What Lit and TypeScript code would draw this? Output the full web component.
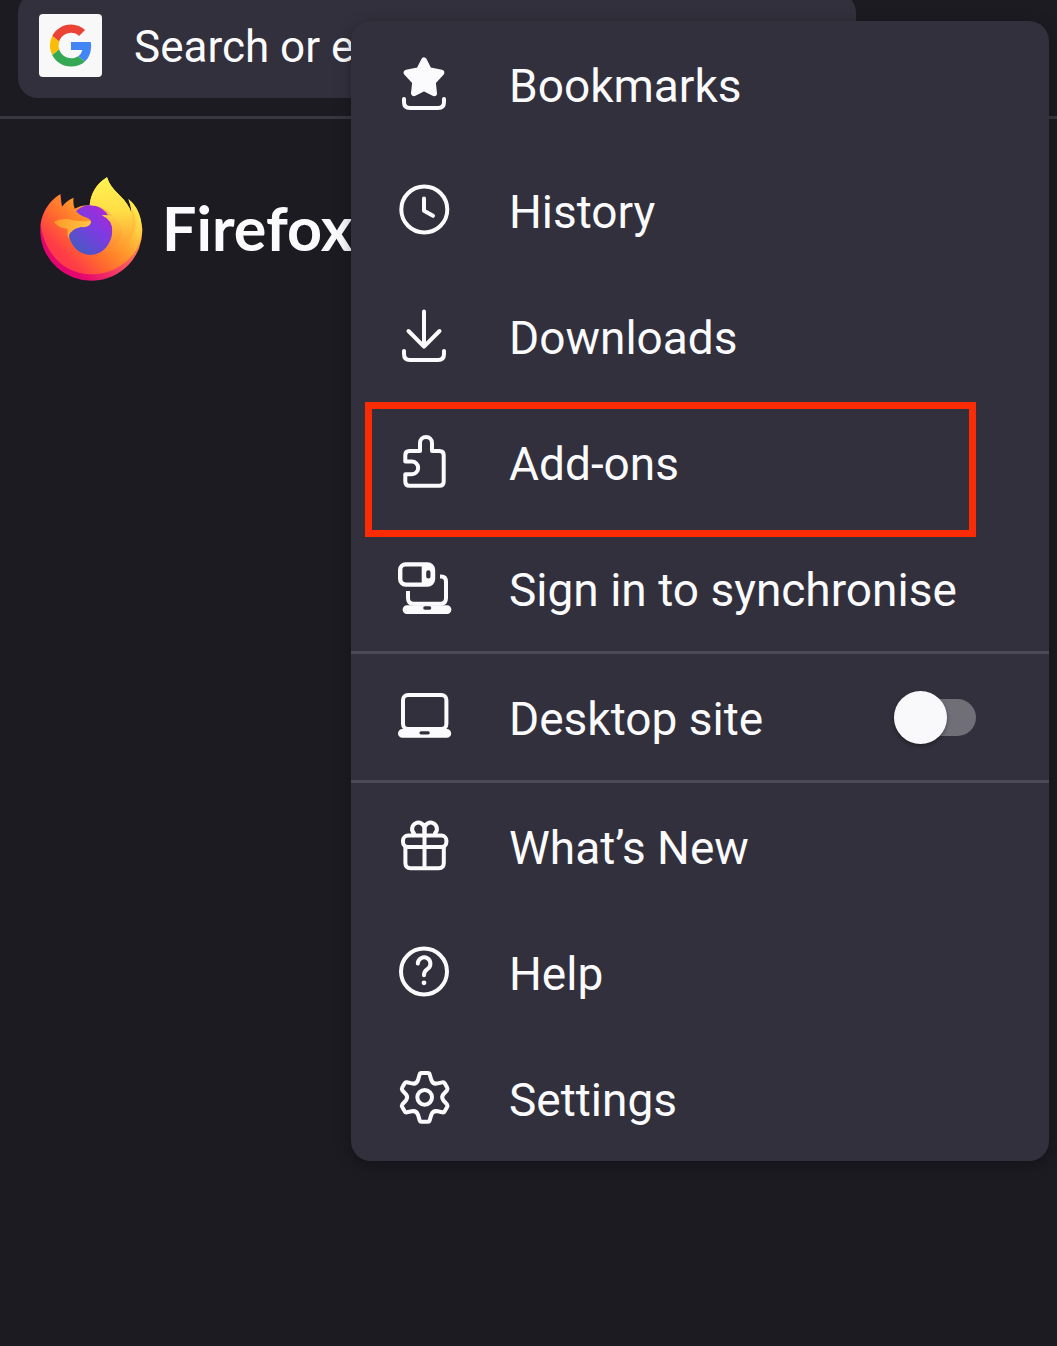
import { LitElement, html, css, svg, nothing, type SVGTemplateResult } from "lit";
import { customElement, property, state } from "lit/decorators.js";

const TRAY = "M8 43V46Q8 52 14 52H42Q48 52 48 46V43";

const ICONS: Record<string, SVGTemplateResult> = {
  bookmarks: svg`
    <path class="solid" stroke-width="6" d="M28 4.5L32.8 14.2L45.3 16.8L36.8 26L38 37.2L28 32L18 37.2L19.2 26L10.7 16.8L23.2 14.2Z"/>
    <path d=${TRAY}/>`,
  history: svg`
    <circle cx="28.3" cy="27.5" r="23"/>
    <path d="M28 16.5V28.7L37 33.8"/>`,
  downloads: svg`
    <path d="M28 3.5V38M12.5 23L28 38.7L43.5 23"/>
    <path d=${TRAY}/>`,
  addons: svg`
    <path d="M9.3 27.6V21.2Q9.3 17 13.5 17H24V9A6 6 0 0 1 36 9V17H43.4Q47.7 17 47.7 21.3V47.5Q47.7 51.8 43.4 51.8H13.6Q9.3 51.8 9.3 47.5V40.3H15.8A6.35 6.35 0 0 0 15.8 27.6Z"/>`,
  sync: svg`
    <rect x="4.2" y="4.4" width="32.8" height="20.2" rx="5.5" stroke-width="4.4"/>
    <path class="fill" fill-rule="evenodd" d="M25.7 4H33Q38 4 38 9V20Q38 25 33 25H25.7ZM32.3 10.2Q30.2 10.2 30.2 12.4V16.4Q30.2 18.5 32.3 18.5Q34.6 18.5 34.6 16.4V12.4Q34.6 10.2 32.3 10.2Z"/>
    <path d="M12 31V38Q12 43.8 17.5 43.8H44.5Q50 43.8 50 38V22Q50 16.6 45 16.6H44" stroke-linecap="butt"/>
    <path class="fill" fill-rule="evenodd" d="M11 45.2H51A4.3 4.3 0 0 1 51 54H11A4.3 4.3 0 0 1 11 45.2ZM29 46.2A1.8 1.8 0 0 0 29 49.8H33.5A1.8 1.8 0 0 0 33.5 46.2Z"/>`,
  desktop: svg`
    <rect x="7" y="6" width="43.4" height="34" rx="5"/>
    <path class="fill" fill-rule="evenodd" d="M6.4 40H50.8A4.4 4.4 0 0 1 50.8 48.8H6.4A4.4 4.4 0 0 1 6.4 40ZM25 42.2A1.6 1.6 0 0 0 25 45.4H32.2A1.6 1.6 0 0 0 32.2 42.2Z"/>`,
  gift: svg`
    <rect x="7" y="17.6" width="43.4" height="11.4" rx="5"/>
    <path d="M9.4 29V45Q9.4 50.2 14.6 50.2H42.6Q47.8 50.2 47.8 45V29M28.5 11V50"/>
    <path d="M28.5 17.5V10.5A6.2 6.2 0 1 0 18 15.3M28.5 10.5A6.2 6.2 0 1 1 39 15.3"/>`,
  help: svg`
    <circle cx="28" cy="27.5" r="23"/>
    <path d="M21.8 19.6A6.3 6.3 0 1 1 31.2 25.2Q28 27.2 28 31.3"/>
    <circle class="fill" cx="28" cy="38.8" r="2.4"/>`,
  settings: svg`
    <g transform="translate(-11 -10) scale(.3333)" stroke-width="12">
      <path d="M109 39H129Q133 39 134 43L139 60Q144 74 158 70L172 67Q177 66 179 70L186 82Q189 87 186 91L175 103Q168 112 175 121L186 133Q189 137 186 142L179 154Q177 158 172 157L158 154Q144 151 139 164L134 181Q133 185 129 185H109Q105 185 104 181L99 164Q94 151 80 154L66 157Q61 158 59 154L52 142Q49 137 52 133L63 121Q70 112 63 103L52 91Q49 87 52 82L59 70Q61 66 66 67L80 70Q94 74 99 60L104 43Q105 39 109 39Z"/>
      <circle cx="119" cy="112" r="22"/>
    </g>`,
};

interface MenuEntry {
  icon: string;
  label: string;
  marked?: boolean;
}

const LIBRARY: MenuEntry[] = [
  { icon: "bookmarks", label: "Bookmarks" },
  { icon: "history", label: "History" },
  { icon: "downloads", label: "Downloads" },
  { icon: "addons", label: "Add-ons", marked: true },
  { icon: "sync", label: "Sign in to synchronise" },
];

const SUPPORT: MenuEntry[] = [
  { icon: "gift", label: "What’s New" },
  { icon: "help", label: "Help" },
  { icon: "settings", label: "Settings" },
];

@customElement("menu-icon")
export class MenuIcon extends LitElement {
  @property() name = "";

  static styles = css`
    :host {
      display: block;
      flex: none;
      width: 56px;
      height: 56px;
    }
    .icon {
      display: block;
      width: 100%;
      height: 100%;
      fill: none;
      stroke: currentColor;
      stroke-linecap: round;
      stroke-linejoin: round;
    }
    .solid {
      fill: currentColor;
    }
    .fill {
      fill: currentColor;
      stroke: none;
    }
  `;

  render() {
    return html`<svg class="icon" viewBox="0 0 56 56" stroke-width="4" aria-hidden="true">${ICONS[this.name]}</svg>`;
  }
}

@customElement("firefox-logo")
export class FirefoxLogo extends LitElement {
  static styles = css`
    :host {
      display: block;
      flex: none;
      width: 103px;
      height: 106px;
    }
    .logo {
      display: block;
      width: 100%;
      height: 100%;
    }
  `;

  render() {
    return html`<svg class="logo" viewBox="31 35 309 318" aria-hidden="true">
      <defs>
        <linearGradient id="body" x1="300" y1="90" x2="90" y2="300" gradientUnits="userSpaceOnUse">
          <stop offset="0" stop-color="#fff04f"/>
          <stop offset=".22" stop-color="#ffca41"/>
          <stop offset=".45" stop-color="#ff962b"/>
          <stop offset=".68" stop-color="#ff6a2e"/>
          <stop offset=".9" stop-color="#ff3b47"/>
        </linearGradient>
        <linearGradient id="rim" x1="330" y1="190" x2="170" y2="350" gradientUnits="userSpaceOnUse">
          <stop offset="0" stop-color="#ffad3c"/>
          <stop offset=".45" stop-color="#fb5560"/>
          <stop offset="1" stop-color="#e3066f"/>
        </linearGradient>
        <linearGradient id="flame" x1="225" y1="40" x2="235" y2="268" gradientUnits="userSpaceOnUse">
          <stop offset="0" stop-color="#fff252"/>
          <stop offset=".45" stop-color="#ffdc45"/>
          <stop offset=".7" stop-color="#ffb83b"/>
          <stop offset="1" stop-color="#ff8a33" stop-opacity="0"/>
        </linearGradient>
        <linearGradient id="lick" x1="235" y1="150" x2="225" y2="268" gradientUnits="userSpaceOnUse">
          <stop offset="0" stop-color="#ffd044"/>
          <stop offset=".5" stop-color="#ffa233"/>
          <stop offset="1" stop-color="#ff6a35" stop-opacity="0"/>
        </linearGradient>
        <linearGradient id="globe" x1="232" y1="140" x2="140" y2="245" gradientUnits="userSpaceOnUse">
          <stop offset="0" stop-color="#a52ad8"/>
          <stop offset=".45" stop-color="#7c3be2"/>
          <stop offset="1" stop-color="#4b57c4"/>
        </linearGradient>
        <linearGradient id="snout" x1="75" y1="165" x2="180" y2="175" gradientUnits="userSpaceOnUse">
          <stop offset="0" stop-color="#ff9a28"/>
          <stop offset="1" stop-color="#ffc443"/>
        </linearGradient>
      </defs>
      <path fill="url(#rim)" d="M32 190C32 150 55 108 92 87L97 124L134 130L280 140L306 150Q304 120 296 101Q330 130 338 190A153 151 0 0 1 32 200Z"/>
      <path fill="url(#body)" d="M33 180C38 140 60 106 92 87Q91 108 97 124Q112 104 132 97Q129 114 135 130Q155 119 180 120Q185 65 232 36Q240 62 266 86Q298 118 306 142Q304 120 296 101Q334 130 337 190C336 270 262 327 186 327C108 327 48 272 33 180Z"/>
      <ellipse cx="182" cy="194" rx="66" ry="75" fill="url(#globe)"/>
      <path fill="url(#flame)" d="M180 120Q185 65 232 36Q240 62 266 86Q304 120 306 156C306 206 278 246 214 268Q250 240 250 200Q250 170 236 155L248 151Q222 120 180 120Z"/>
      <path fill="url(#lick)" d="M216 150Q232 148 248 152Q276 170 276 200Q272 246 208 270Q249 246 249 200Q249 164 216 150Z"/>
      <path fill="#ff9a30" opacity=".3" d="M306 130Q332 180 303 222Q284 252 240 268Q286 238 302 190Q310 160 306 130Z"/>
      <path fill="#ff8c27" d="M104 150Q112 134 134 130Q143 147 168 156Q184 161 184 170Q178 180 156 178Q126 172 104 150Z"/>
      <path fill="url(#body)" d="M92 124L134 130Q139 142 150 149L120 172L128 200Q118 197 116 211L100 240L70 190L76 150Z"/>
      <path fill="url(#snout)" d="M73 170Q91 159 116 161Q142 171 181 166Q188 169 179 180Q172 187 155 185Q136 188 124 200Q118 206 116 222Q112 200 114 190Q88 190 73 170Z"/>
    </svg>`;
  }
}

@customElement("app-root")
export class AppRoot extends LitElement {
  @state() private desktopSite = false;

  static styles = css`
    :host {
      display: block;
      position: relative;
      min-height: 100vh;
      overflow: hidden;
      background: #1c1b22;
      color: #fbfbfe;
      font-family: Roboto, "Liberation Sans", sans-serif;
    }
    .toolbar {
      padding: 0 201px 18px 18px;
      border-bottom: 3px solid #38363f;
    }
    .search {
      display: flex;
      align-items: center;
      gap: 32px;
      height: 105px;
      margin-top: -7px;
      padding: 0 21px;
      box-sizing: border-box;
      border-radius: 20px;
      background: #32303c;
    }
    .engine {
      display: grid;
      place-items: center;
      flex: none;
      width: 63px;
      height: 63px;
      padding: 0;
      border: 0;
      border-radius: 4px;
      background: #f8f8f9;
    }
    .google {
      display: block;
      width: 42px;
      height: 43px;
    }
    .query {
      flex: 1;
      min-width: 0;
      padding: 2px 0 0;
      border: 0;
      outline: 0;
      background: none;
      color: inherit;
      font: 44px/56px Roboto, "Liberation Sans", sans-serif;
    }
    .query::placeholder {
      color: #fbfbfe;
      opacity: 1;
    }
    .brand {
      display: flex;
      align-items: center;
      gap: 19px;
      padding: 58px 40px;
    }
    .wordmark {
      margin: 0;
      padding-bottom: 4px;
      font: 700 61px/72px Lato, "Open Sans", sans-serif;
    }
    .menu {
      position: absolute;
      top: 21px;
      right: 8px;
      left: 351px;
      border-radius: 20px;
      background: #32303c;
      box-shadow: 0 4px 16px rgba(0, 0, 0, 0.3);
    }
    .group + .group {
      border-top: 3px solid #4c4a56;
    }
    .list {
      margin: 0;
      padding: 0;
      list-style: none;
    }
    .entry {
      position: relative;
    }
    .row {
      display: flex;
      align-items: center;
      gap: 57px;
      height: 126px;
      padding: 0 73px 0 45px;
      color: inherit;
      font-size: 46px;
      line-height: 56px;
      text-decoration: none;
      white-space: nowrap;
    }
    .label {
      flex: 1;
      padding-top: 4px;
    }
    .highlight {
      position: absolute;
      inset: 3px 73px -12px 14px;
      border: 7px solid #fb2b05;
      pointer-events: none;
    }
    .switch {
      appearance: none;
      display: flex;
      align-items: center;
      flex: none;
      box-sizing: border-box;
      width: 82px;
      height: 37px;
      margin: 0;
      border-radius: 19px;
      background: #706e77;
    }
    .switch::before {
      content: "";
      flex: none;
      width: 53px;
      height: 53px;
      border-radius: 50%;
      background: #f9f9fc;
      box-shadow: 0 2px 4px rgba(0, 0, 0, 0.35);
    }
    .switch:checked {
      justify-content: flex-end;
    }
  `;

  private renderEntry(entry: MenuEntry) {
    return html`<li class="entry">
      <a class="row" href="#${entry.icon}">
        <menu-icon name=${entry.icon}></menu-icon>
        <span class="label">${entry.label}</span>
      </a>
      ${entry.marked ? html`<div class="highlight"></div>` : nothing}
    </li>`;
  }

  render() {
    return html`
      <header class="toolbar">
        <div class="search">
          <button class="engine" type="button" aria-label="Google">
            <svg class="google" viewBox="0 0 48 48" aria-hidden="true">
              <path fill="#EA4335" d="M24 9.5c3.54 0 6.71 1.22 9.21 3.6l6.85-6.85C35.9 2.38 30.47 0 24 0 14.62 0 6.51 5.38 2.56 13.22l7.98 6.19C12.43 13.72 17.74 9.5 24 9.5z"/>
              <path fill="#4285F4" d="M46.98 24.55c0-1.57-.15-3.09-.38-4.55H24v9.02h12.94c-.58 2.96-2.26 5.48-4.78 7.18l7.73 6c4.51-4.18 7.09-10.36 7.09-17.65z"/>
              <path fill="#FBBC05" d="M10.53 28.59c-.48-1.45-.76-2.99-.76-4.59s.27-3.14.76-4.59l-7.98-6.19C.92 16.46 0 20.12 0 24c0 3.88.92 7.54 2.56 10.78l7.97-6.19z"/>
              <path fill="#34A853" d="M24 48c6.48 0 11.93-2.13 15.89-5.81l-7.73-6c-2.15 1.45-4.92 2.3-8.16 2.3-6.26 0-11.57-4.22-13.47-9.91l-7.98 6.19C6.51 42.62 14.62 48 24 48z"/>
            </svg>
          </button>
          <input class="query" type="text" aria-label="Search or enter address" placeholder="Search or enter address" />
        </div>
      </header>
      <main class="brand">
        <firefox-logo></firefox-logo>
        <h1 class="wordmark">Firefox</h1>
      </main>
      <nav class="menu" aria-label="Menu">
        <div class="group">
          <ul class="list">${LIBRARY.map((entry) => this.renderEntry(entry))}</ul>
        </div>
        <div class="group">
          <label class="row">
            <menu-icon name="desktop"></menu-icon>
            <span class="label">Desktop site</span>
            <input
              class="switch"
              type="checkbox"
              role="switch"
              .checked=${this.desktopSite}
              @change=${(e: Event) => (this.desktopSite = (e.target as HTMLInputElement).checked)}
            />
          </label>
        </div>
        <div class="group">
          <ul class="list">${SUPPORT.map((entry) => this.renderEntry(entry))}</ul>
        </div>
      </nav>
    `;
  }
}
